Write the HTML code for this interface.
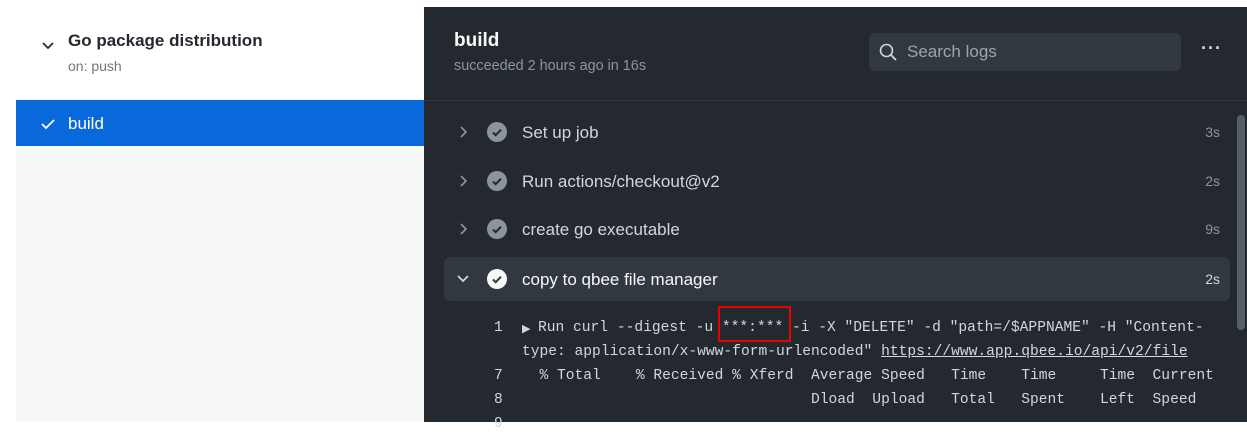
<!DOCTYPE html>
<html><head><meta charset="utf-8"><style>
*{margin:0;padding:0;box-sizing:border-box}
body{width:1247px;height:422px;overflow:hidden;background:#fff;font-family:"Liberation Sans",sans-serif;position:relative}
.abs{position:absolute}
.left-bg{left:16px;top:146px;width:408px;height:276px;background:#f6f8fa}
.blue{left:16px;top:100px;width:408px;height:46px;background:#0969da}
.dark{left:424px;top:7px;width:823px;height:415px;background:#24292f}
.row{position:absolute;left:444px;width:786px;height:44px;color:#d0d7de;font-size:17px}
.row .t{position:absolute;left:78px;top:13px}
.row .d{position:absolute;right:10px;top:14px;font-size:14px;color:#8c959f}
.mono{font-family:"Liberation Mono",monospace;font-size:14.6px;color:#d0d7de;position:absolute;white-space:pre}
</style></head><body>
<div class="abs left-bg"></div>
<svg class="abs" style="left:41px;top:38px" width="14" height="14" viewBox="0 0 14 14"><path d="M2 5l5 5 5-5" fill="none" stroke="#24292f" stroke-width="1.8"/></svg>
<div class="abs" style="left:68px;top:31px;font-size:17px;font-weight:bold;color:#24292f">Go package distribution</div>
<div class="abs" style="left:68px;top:58px;font-size:14px;color:#6e7781">on: push</div>
<div class="abs blue"></div>
<svg class="abs" style="left:40px;top:117px" width="16" height="14" viewBox="0 0 16 14"><path d="M2 7l4 4 8-8" fill="none" stroke="#fff" stroke-width="1.8"/></svg>
<div class="abs" style="left:68px;top:114px;font-size:17px;color:#fff">build</div>
<div class="abs dark"></div>
<div class="abs" style="left:424px;top:100px;width:823px;height:1px;background:#32383f"></div>
<div class="abs" style="left:454px;top:30px;font-size:19px;font-weight:bold;color:#f6f8fa">build</div>
<div class="abs" style="left:454px;top:58px;font-size:14.4px;color:#8c959f">succeeded 2 hours ago in 16s</div>
<div class="abs" style="left:869px;top:33px;width:312px;height:38px;background:#32383f;border-radius:6px"></div>
<svg class="abs" style="left:878px;top:42px" width="20" height="20" viewBox="0 0 20 20"><circle cx="8.5" cy="8.5" r="6" fill="none" stroke="#d0d7de" stroke-width="1.6"/><path d="M13 13l5 5" stroke="#d0d7de" stroke-width="1.8"/></svg>
<div class="abs" style="left:907px;top:42px;font-size:17px;color:#9da5ae">Search logs</div>
<div class="abs" style="left:1201px;top:38px;font-size:18px;color:#d0d7de;letter-spacing:1px;font-weight:bold">···</div>
<div class="abs" style="left:1237px;top:115px;width:8px;height:215px;background:#57606a;border-radius:4px"></div>

<div class="row" style="top:110px">
<svg class="abs" style="left:14px;top:15px" width="12" height="14" viewBox="0 0 12 14"><path d="M3 2l5 5-5 5" fill="none" stroke="#8c959f" stroke-width="1.6"/></svg>
<svg class="abs" style="left:43px;top:12px" width="20" height="20" viewBox="0 0 20 20"><circle cx="10" cy="10" r="10" fill="#8c959f"/><path d="M6 10.5l2.7 2.7 5.3-5.5" fill="none" stroke="#24292f" stroke-width="2"/></svg>
<span class="t">Set up job</span><span class="d">3s</span></div>
<div class="row" style="top:159px">
<svg class="abs" style="left:14px;top:15px" width="12" height="14" viewBox="0 0 12 14"><path d="M3 2l5 5-5 5" fill="none" stroke="#8c959f" stroke-width="1.6"/></svg>
<svg class="abs" style="left:43px;top:12px" width="20" height="20" viewBox="0 0 20 20"><circle cx="10" cy="10" r="10" fill="#8c959f"/><path d="M6 10.5l2.7 2.7 5.3-5.5" fill="none" stroke="#24292f" stroke-width="2"/></svg>
<span class="t">Run actions/checkout@v2</span><span class="d">2s</span></div>
<div class="row" style="top:207px">
<svg class="abs" style="left:14px;top:15px" width="12" height="14" viewBox="0 0 12 14"><path d="M3 2l5 5-5 5" fill="none" stroke="#8c959f" stroke-width="1.6"/></svg>
<svg class="abs" style="left:43px;top:12px" width="20" height="20" viewBox="0 0 20 20"><circle cx="10" cy="10" r="10" fill="#8c959f"/><path d="M6 10.5l2.7 2.7 5.3-5.5" fill="none" stroke="#24292f" stroke-width="2"/></svg>
<span class="t">create go executable</span><span class="d">9s</span></div>
<div class="row" style="top:257px;background:#32383f;border-radius:6px">
<svg class="abs" style="left:12px;top:16px" width="14" height="12" viewBox="0 0 14 12"><path d="M2 3l5 5 5-5" fill="none" stroke="#d0d7de" stroke-width="1.8"/></svg>
<svg class="abs" style="left:43px;top:12px" width="20" height="20" viewBox="0 0 20 20"><circle cx="10" cy="10" r="10" fill="#f6f8fa"/><path d="M6 10.5l2.7 2.7 5.3-5.5" fill="none" stroke="#32383f" stroke-width="2"/></svg>
<span class="t" style="color:#f6f8fa">copy to qbee file manager</span><span class="d" style="color:#d0d7de">2s</span></div>

<div class="mono" style="left:494px;top:320px">1</div>
<div class="mono" style="left:522px;top:322px;font-size:11px">▶</div>
<div class="mono" style="left:538px;top:320px">Run curl --digest -u ***:*** -i -X "DELETE" -d "path=/$APPNAME" -H "Content-</div>
<div class="abs" style="left:718px;top:306px;width:73px;height:36px;border:2px solid #e00"></div>
<div class="mono" style="left:522px;top:344px">type: application/x-www-form-urlencoded" <span style="text-decoration:underline">https://www.app.qbee.io/api/v2/file</span></div>
<div class="mono" style="left:494px;top:368px">7</div>
<div class="mono" style="left:522px;top:368px">  % Total    % Received % Xferd  Average Speed   Time    Time     Time  Current</div>
<div class="mono" style="left:494px;top:392px">8</div>
<div class="mono" style="left:522px;top:392px">                                 Dload  Upload   Total   Spent    Left  Speed</div>
<div class="mono" style="left:494px;top:416px">9</div>
</body></html>
